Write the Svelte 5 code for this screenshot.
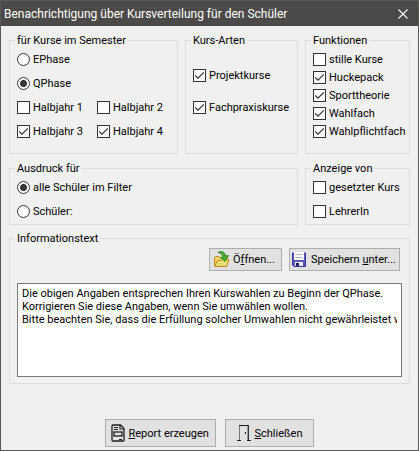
<script lang="ts">
  let phase = $state('q');
  let target = $state('all');

  let semesters = $state([
    { label: 'Halbjahr 1', checked: false },
    { label: 'Halbjahr 2', checked: false },
    { label: 'Halbjahr 3', checked: true },
    { label: 'Halbjahr 4', checked: true },
  ]);

  let courseTypes = $state([
    { label: 'Projektkurse', checked: true },
    { label: 'Fachpraxiskurse', checked: true },
  ]);

  let functions = $state([
    { label: 'stille Kurse', checked: false },
    { label: 'Huckepack', checked: true },
    { label: 'Sporttheorie', checked: true },
    { label: 'Wahlfach', checked: true },
    { label: 'Wahlpflichtfach', checked: true },
  ]);

  let display = $state([
    { label: 'gesetzter Kurs', checked: false },
    { label: 'LehrerIn', checked: false },
  ]);

  let info = $state(
    'Die obigen Angaben entsprechen Ihren Kurswahlen zu Beginn der QPhase.\n' +
      'Korrigieren Sie diese Angaben, wenn Sie umwählen wollen.\n' +
      'Bitte beachten Sie, dass die Erfüllung solcher Umwahlen nicht gewährleistet werden kann.'
  );
</script>

{#snippet checks(items)}
  {#each items as item}
    <label class="option">
      <input type="checkbox" bind:checked={item.checked} />
      <span>{item.label}</span>
    </label>
  {/each}
{/snippet}

<div class="window">
  <header class="titlebar">
    <h1>Benachrichtigung über Kursverteilung für den Schüler</h1>
    <button class="close" type="button" aria-label="Schließen">
      <svg viewBox="0 0 10 10" width="10" height="10" aria-hidden="true">
        <path d="M0.5 0.5 L9.5 9.5 M9.5 0.5 L0.5 9.5" fill="none" stroke="#fff" stroke-width="1.1" />
      </svg>
    </button>
  </header>

  <main>
    <div class="groups">
      <fieldset>
        <legend>für Kurse im Semester</legend>
        <label class="option">
          <input type="radio" name="phase" value="e" bind:group={phase} />
          <span>EPhase</span>
        </label>
        <label class="option">
          <input type="radio" name="phase" value="q" bind:group={phase} />
          <span>QPhase</span>
        </label>
        <div class="semesters">
          {@render checks(semesters)}
        </div>
      </fieldset>

      <fieldset class="roomy">
        <legend>Kurs-Arten</legend>
        {@render checks(courseTypes)}
      </fieldset>

      <fieldset class="dense">
        <legend>Funktionen</legend>
        {@render checks(functions)}
      </fieldset>

      <fieldset class="wide short">
        <legend>Ausdruck für</legend>
        <label class="option">
          <input type="radio" name="target" value="all" bind:group={target} />
          <span>alle Schüler im Filter</span>
        </label>
        <label class="option">
          <input type="radio" name="target" value="one" bind:group={target} />
          <span>Schüler:</span>
        </label>
      </fieldset>

      <fieldset class="short">
        <legend>Anzeige von</legend>
        {@render checks(display)}
      </fieldset>
    </div>

    <fieldset class="info">
      <legend id="info-title">Informationstext</legend>
      <div class="tools">
        <button class="tool open" type="button">
          <svg viewBox="0 0 17 17" width="17" height="17" aria-hidden="true">
            <path d="M1.5 14.5 V7 L2.5 5.5 H6 L7.5 7 H13.5 V10" fill="#f2d269" stroke="#c58a16" />
            <path d="M1.5 15.5 L4.5 9.5 H8 L9 8.5 H16 L13.5 15.5 Z" fill="#e9dd76" stroke="#c58a16" stroke-linejoin="round" />
            <path d="M5 1.5 C8 -0.3 12 0.5 12.6 5 L15.5 4.5 L12 10.5 L7.5 6.5 L10 6 C9.6 3 8 2 5 1.5 Z" fill="#4db02c" stroke="#1d7a12" stroke-width="0.8" />
          </svg>
          <span>Ö<u>f</u>fnen...</span>
        </button>
        <button class="tool save" type="button">
          <svg viewBox="0 0 14 15" width="14" height="15" aria-hidden="true">
            <path d="M0.5 1 H13.5 V14.5 H2 L0.5 13 Z" fill="#5b58bd" stroke="#37349a" />
            <rect x="2" y="0" width="10" height="8" fill="#f7f7fb" />
            <path d="M3.5 2.5 H10.5 M3.5 5.5 H10.5" stroke="#b5b5bd" />
            <rect x="3" y="10" width="8" height="4" fill="#e8e8f2" />
            <rect x="4" y="11" width="3" height="3" fill="#232064" />
          </svg>
          <span>Speichern <u>u</u>nter...</span>
        </button>
      </div>
      <div class="memo">
        <textarea rows="6" wrap="off" spellcheck="false" aria-labelledby="info-title" bind:value={info}></textarea>
      </div>
    </fieldset>

    <footer>
      <button class="action report" type="button">
        <svg viewBox="0 0 14 18" width="14" height="18" aria-hidden="true">
          <path d="M1 2 Q1 1 2 1 H9.5 L13 4.5 V16 Q13 17 12 17 H2 Q1 17 1 16 Z" fill="none" stroke="#1c1c1c" stroke-width="1.3" />
          <path d="M9 1 V5 H13" fill="none" stroke="#1c1c1c" stroke-width="1.1" />
          <path d="M3 3.5 H7 M3 5.5 H7 M8 15.5 H11" stroke="#1c1c1c" />
          <rect x="3" y="8" width="8" height="4" fill="none" stroke="#1c1c1c" stroke-width="1.3" />
        </svg>
        <span><u>R</u>eport erzeugen</span>
      </button>
      <button class="action exit" type="button">
        <svg viewBox="0 0 14 18" width="14" height="18" aria-hidden="true">
          <path d="M2.5 16 V1" stroke="#777" />
          <path d="M2 1.5 H12" stroke="#1c1c1c" />
          <path d="M10.5 2 V16" stroke="#999" />
          <path d="M11.5 1 V16" stroke="#333" />
          <path d="M0 16.5 H4 M10 16.5 H14" stroke="#1c1c1c" />
          <rect x="8" y="8" width="1" height="2" fill="#1c1c1c" />
        </svg>
        <span><u>S</u>chließen</span>
      </button>
    </footer>
  </main>
</div>

<style>
  :global(body) {
    margin: 0;
  }

  .window {
    box-sizing: border-box;
    min-height: 100vh;
    border: 1px solid #5a5855;
    background: #f0f0f0;
    color: #000;
    font: 11px/13px Roboto, 'DejaVu Sans', sans-serif;
  }

  .titlebar {
    display: flex;
    align-items: center;
    justify-content: space-between;
    height: 25px;
    padding: 0 10px 0 3px;
    background: #4c4a48;
    color: #fff;
  }

  h1 {
    margin: 0;
    font: 12px/16px Roboto, 'Open Sans', sans-serif;
    white-space: nowrap;
  }

  .close {
    display: flex;
    padding: 0;
    border: 0;
    background: none;
  }

  main {
    padding: 8px 8px 3px;
  }

  .groups {
    display: grid;
    grid-template-columns: 169fr 113fr 105fr;
    gap: 8px 7px;
  }

  fieldset {
    min-width: 0;
    margin: 0;
    padding: 0 7px 10px;
    border: 1px solid #dcdcdc;
  }

  legend {
    margin-left: -2px;
    padding: 0 2px;
  }

  .wide {
    grid-column: span 2;
  }

  .short {
    padding-bottom: 1px;
  }

  .option {
    display: flex;
    align-items: center;
    gap: 3px;
    height: 24px;
    white-space: nowrap;
  }

  .roomy {
    padding-top: 12px;
  }

  .roomy .option {
    height: 32px;
  }

  .dense {
    padding-top: 3px;
  }

  .dense .option {
    height: 18px;
  }

  .semesters {
    display: grid;
    grid-template-columns: 80px 1fr;
  }

  input {
    appearance: none;
    flex: none;
    box-sizing: border-box;
    width: 13px;
    height: 13px;
    margin: 0;
    border: 1px solid #333;
    background: #fff;
  }

  input[type='radio'] {
    border-radius: 50%;
  }

  input[type='radio']:checked {
    background: radial-gradient(circle, #333 3px, #fff 4px);
  }

  input[type='checkbox']:checked {
    background: #fff
      url("data:image/svg+xml,%3Csvg xmlns='http://www.w3.org/2000/svg' viewBox='0 0 11 11'%3E%3Cpath d='M1.2 5.4 L4 8.2 L9.8 2.4' fill='none' stroke='%23333' stroke-width='1.3'/%3E%3C/svg%3E");
  }

  .info {
    margin-top: 7px;
    padding: 3px 7px 6px;
  }

  .tools {
    display: flex;
    justify-content: flex-end;
    gap: 7px;
    padding-right: 2px;
  }

  .tool,
  .action {
    display: flex;
    align-items: center;
    box-sizing: border-box;
    border: 1px solid #adadad;
    background: #e1e1e1;
    color: #000;
    font: inherit;
    white-space: nowrap;
  }

  .tool {
    height: 23px;
    padding: 0 2px;
  }

  .open {
    gap: 3px;
    min-width: 73px;
    padding-left: 3px;
  }

  .save {
    gap: 5px;
    min-width: 111px;
  }

  .memo {
    margin-top: 12px;
    padding: 3px 4px;
    border: 1px solid #7a7a7a;
    background: #fff;
  }

  textarea {
    display: block;
    box-sizing: border-box;
    width: 100%;
    height: 86px;
    padding: 0;
    border: 0;
    outline: 0;
    background: none;
    color: inherit;
    font: inherit;
    white-space: pre;
    overflow: hidden;
    resize: none;
  }

  footer {
    display: flex;
    justify-content: center;
    gap: 9px;
    margin-top: 35px;
  }

  .action {
    gap: 4px;
    height: 28px;
  }

  .report {
    min-width: 111px;
    padding: 0 5px;
  }

  .exit {
    min-width: 88px;
    padding: 0 11px;
  }
</style>
